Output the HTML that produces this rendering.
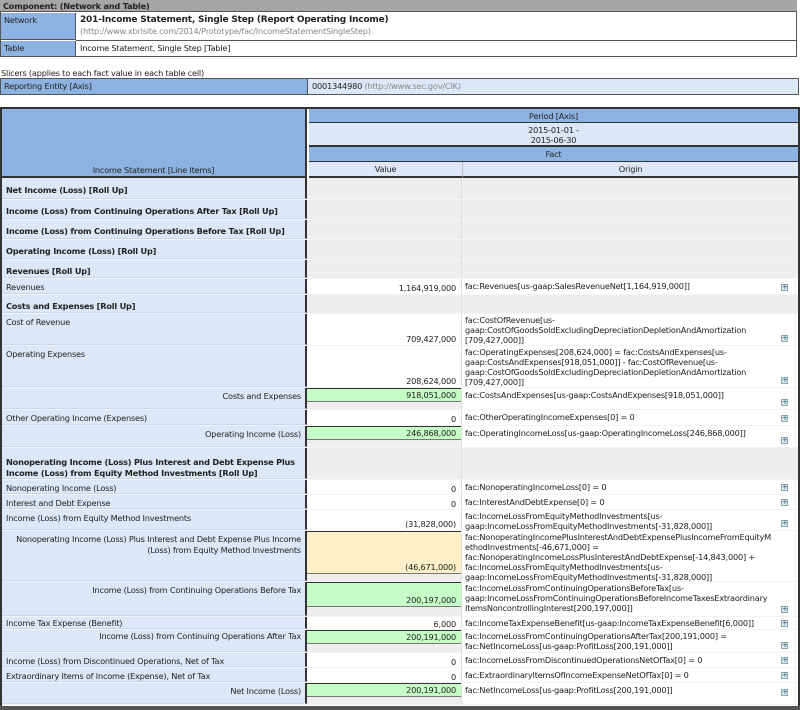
<!DOCTYPE html>
<html><head><meta charset="utf-8"><style>
*{margin:0;padding:0;box-sizing:border-box}
body{width:800px;height:710px;background:#fff;font-family:Verdana,"DejaVu Sans","Liberation Sans",sans-serif;font-size:8.2px;color:#222;position:relative;overflow:hidden;letter-spacing:-0.2px}
.a{position:absolute}
.hb{background:#8db3e2}
.lb{background:#dce8f8}
.row{position:absolute;left:2px;width:796px;display:flex;border-bottom:1px solid #f4f4f4}
.l{width:305px;background:#dce8f8;padding:3px 4px;border-right:2px solid #333;border-bottom:1px solid #c8d8ec;line-height:11px}
.v{width:155px;background:#eee;position:relative;border-right:1px solid #ddd}
.o{flex:1;background:#eee;position:relative;line-height:10px;padding:1px 3px}
.w{background:#fff}
.vi{position:absolute;left:0;right:0;top:0;text-align:right;padding-right:5px;display:flex;align-items:flex-end;justify-content:flex-end;padding-bottom:1px}
.g{background:#c6fdc6;border-top:1px solid #333;border-bottom:1px solid #777}
.y{background:#fdf0c8;border-top:1px solid #333;border-bottom:1px solid #777}
.p{position:absolute;right:10px;bottom:3px;width:7px;height:7px;border:1px solid #8aa;background:#dde8f4;font-size:7px;line-height:5px;text-align:center;color:#357}
.b{font-weight:bold}
.r{text-align:right}
</style></head><body>
<div class="a" style="left:0;top:0;width:797px;height:57px;border:1px solid #555;border-top:none"></div>
<div class="a b" style="left:0;top:0;width:797px;height:12px;background:#a6a6a6;border-bottom:1px solid #555;padding:1px 3px;line-height:10px">Component: (Network and Table)</div>
<div class="a hb" style="left:1px;top:13px;width:75px;height:27px;padding:2px 3px;border-right:1px solid #555;border-bottom:1px solid #555">Network</div>
<div class="a" style="left:80px;top:14px;line-height:11px"><span class="b" style="font-size:9px">201-Income Statement, Single Step (Report Operating Income)</span><br><span style="color:#888">(http://www.xbrlsite.com/2014/Prototype/fac/IncomeStatementSingleStep)</span></div>
<div class="a" style="left:76px;top:40px;width:721px;height:1px;background:#555"></div>
<div class="a hb" style="left:1px;top:41px;width:75px;height:15px;padding:2px 3px;border-right:1px solid #555">Table</div>
<div class="a" style="left:80px;top:43px">Income Statement, Single Step [Table]</div>
<div class="a" style="left:1px;top:68px">Slicers (applies to each fact value in each table cell)</div>
<div class="a" style="left:0;top:78px;width:799px;height:17px;border:1px solid #555;background:#dce8f8"></div>
<div class="a hb" style="left:1px;top:79px;width:307px;height:15px;padding:2px 3px;border-right:1px solid #555">Reporting Entity [Axis]</div>
<div class="a" style="left:312px;top:81px">0001344980 <span style="color:#888">(http://www.sec.gov/CIK)</span></div>

<div class="a" style="left:0;top:107px;width:800px;height:603px;border:2px solid #333;border-bottom:none"></div>
<div class="a hb" style="left:2px;top:109px;width:305px;height:69px;border-right:2px solid #333;border-bottom:2px solid #333;text-align:center;padding-top:56px">Income Statement [Line Items]</div>
<div class="a hb" style="left:309px;top:109px;width:489px;height:14px;text-align:center;line-height:14px;border-bottom:1px solid #333">Period [Axis]</div>
<div class="a lb" style="left:309px;top:123px;width:489px;height:24px;text-align:center;line-height:10px;padding-top:2px;border-bottom:2px solid #333">2015-01-01 -<br>2015-06-30</div>
<div class="a hb" style="left:309px;top:147px;width:489px;height:15px;text-align:center;line-height:15px;border-bottom:1px solid #333">Fact</div>
<div class="a lb" style="left:309px;top:162px;width:154px;height:16px;text-align:center;line-height:15px;border-bottom:2px solid #333;border-right:1px solid #bbb">Value</div>
<div class="a lb" style="left:463px;top:162px;width:335px;height:16px;text-align:center;line-height:15px;border-bottom:2px solid #333">Origin</div>

<div class="row" style="top:178px;height:22px"><div class="l b" style="padding-top:7px">Net Income (Loss) [Roll Up]</div><div class="v"></div><div class="o"></div></div>
<div class="row" style="top:200px;height:20px"><div class="l b" style="padding-top:6px">Income (Loss) from Continuing Operations After Tax [Roll Up]</div><div class="v"></div><div class="o"></div></div>
<div class="row" style="top:220px;height:20px"><div class="l b" style="padding-top:6px">Income (Loss) from Continuing Operations Before Tax [Roll Up]</div><div class="v"></div><div class="o"></div></div>
<div class="row" style="top:240px;height:20px"><div class="l b" style="padding-top:6px">Operating Income (Loss) [Roll Up]</div><div class="v"></div><div class="o"></div></div>
<div class="row" style="top:260px;height:19px"><div class="l b" style="padding-top:6px">Revenues [Roll Up]</div><div class="v"></div><div class="o"></div></div>
<div class="row" style="top:279px;height:16px"><div class="l">Revenues</div><div class="v w"><div class="vi" style="height:15px">1,164,919,000</div></div><div class="o w" style="padding-top:2px">fac:Revenues[us-gaap:SalesRevenueNet[1,164,919,000]]<div class="p">+</div></div></div>
<div class="row" style="top:295px;height:19px"><div class="l b" style="padding-top:6px">Costs and Expenses [Roll Up]</div><div class="v"></div><div class="o"></div></div>
<div class="row" style="top:314px;height:32px"><div class="l">Cost of Revenue</div><div class="v w"><div class="vi" style="height:31px">709,427,000</div></div><div class="o w">fac:CostOfRevenue[us-<br>gaap:CostOfGoodsSoldExcludingDepreciationDepletionAndAmortization<br>[709,427,000]]<div class="p">+</div></div></div>
<div class="row" style="top:346px;height:42px"><div class="l">Operating Expenses</div><div class="v w"><div class="vi" style="height:41px">208,624,000</div></div><div class="o w">fac:OperatingExpenses[208,624,000] = fac:CostsAndExpenses[us-<br>gaap:CostsAndExpenses[918,051,000]] - fac:CostOfRevenue[us-<br>gaap:CostOfGoodsSoldExcludingDepreciationDepletionAndAmortization<br>[709,427,000]]<div class="p">+</div></div></div>
<div class="row" style="top:388px;height:22px"><div class="l r">Costs and Expenses</div><div class="v"><div class="vi g" style="height:14px">918,051,000</div></div><div class="o w" style="padding-top:2px">fac:CostsAndExpenses[us-gaap:CostsAndExpenses[918,051,000]]<div class="p">+</div></div></div>
<div class="row" style="top:410px;height:16px"><div class="l">Other Operating Income (Expenses)</div><div class="v w"><div class="vi" style="height:15px">0</div></div><div class="o w" style="padding-top:2px">fac:OtherOperatingIncomeExpenses[0] = 0<div class="p">+</div></div></div>
<div class="row" style="top:426px;height:22px"><div class="l r">Operating Income (Loss)</div><div class="v"><div class="vi g" style="height:14px">246,868,000</div></div><div class="o w" style="padding-top:2px">fac:OperatingIncomeLoss[us-gaap:OperatingIncomeLoss[246,868,000]]<div class="p">+</div></div></div>
<div class="row" style="top:448px;height:32px"><div class="l b" style="padding-top:9px">Nonoperating Income (Loss) Plus Interest and Debt Expense Plus Income (Loss) from Equity Method Investments [Roll Up]</div><div class="v"></div><div class="o"></div></div>
<div class="row" style="top:480px;height:15px"><div class="l">Nonoperating Income (Loss)</div><div class="v w"><div class="vi" style="height:15px">0</div></div><div class="o w" style="padding-top:2px">fac:NonoperatingIncomeLoss[0] = 0<div class="p">+</div></div></div>
<div class="row" style="top:495px;height:15px"><div class="l">Interest and Debt Expense</div><div class="v w"><div class="vi" style="height:15px">0</div></div><div class="o w" style="padding-top:2px">fac:InterestAndDebtExpense[0] = 0<div class="p">+</div></div></div>
<div class="row" style="top:510px;height:21px"><div class="l">Income (Loss) from Equity Method Investments</div><div class="v w"><div class="vi" style="height:20px">(31,828,000)</div></div><div class="o w">fac:IncomeLossFromEquityMethodInvestments[us-<br>gaap:IncomeLossFromEquityMethodInvestments[-31,828,000]]<div class="p">+</div></div></div>
<div class="row" style="top:531px;height:51px"><div class="l r">Nonoperating Income (Loss) Plus Interest and Debt Expense Plus Income (Loss) from Equity Method Investments</div><div class="v"><div class="vi y" style="height:43px">(46,671,000)</div></div><div class="o w">fac:NonoperatingIncomePlusInterestAndDebtExpensePlusIncomeFromEquityM<br>ethodInvestments[-46,671,000] =<br>fac:NonoperatingIncomeLossPlusInterestAndDebtExpense[-14,843,000] +<br>fac:IncomeLossFromEquityMethodInvestments[us-<br>gaap:IncomeLossFromEquityMethodInvestments[-31,828,000]]</div></div>
<div class="row" style="top:582px;height:35px"><div class="l r">Income (Loss) from Continuing Operations Before Tax</div><div class="v"><div class="vi g" style="height:25px">200,197,000</div></div><div class="o w">fac:IncomeLossFromContinuingOperationsBeforeTax[us-<br>gaap:IncomeLossFromContinuingOperationsBeforeIncomeTaxesExtraordinary<br>ItemsNoncontrollingInterest[200,197,000]]<div class="p">+</div></div></div>
<div class="row" style="top:617px;height:13px"><div class="l" style="padding-top:1px">Income Tax Expense (Benefit)</div><div class="v w"><div class="vi" style="height:13px">6,000</div></div><div class="o w" style="padding-top:1px">fac:IncomeTaxExpenseBenefit[us-gaap:IncomeTaxExpenseBenefit[6,000]]<div class="p" style="bottom:2px">+</div></div></div>
<div class="row" style="top:630px;height:23px"><div class="l r" style="padding-top:1px">Income (Loss) from Continuing Operations After Tax</div><div class="v"><div class="vi g" style="height:14px">200,191,000</div></div><div class="o w">fac:IncomeLossFromContinuingOperationsAfterTax[200,191,000] =<br>fac:NetIncomeLoss[us-gaap:ProfitLoss[200,191,000]]<div class="p">+</div></div></div>
<div class="row" style="top:653px;height:15px"><div class="l">Income (Loss) from Discontinued Operations, Net of Tax</div><div class="v w"><div class="vi" style="height:15px">0</div></div><div class="o w" style="padding-top:2px">fac:IncomeLossFromDiscontinuedOperationsNetOfTax[0] = 0<div class="p">+</div></div></div>
<div class="row" style="top:668px;height:15px"><div class="l">Extraordinary Items of Income (Expense), Net of Tax</div><div class="v w"><div class="vi" style="height:15px">0</div></div><div class="o w" style="padding-top:2px">fac:ExtraordinaryItemsOfIncomeExpenseNetOfTax[0] = 0<div class="p">+</div></div></div>
<div class="row" style="top:683px;height:22px"><div class="l r">Net Income (Loss)</div><div class="v"><div class="vi g" style="height:14px">200,191,000</div></div><div class="o w" style="padding-top:2px">fac:NetIncomeLoss[us-gaap:ProfitLoss[200,191,000]]<div class="p" style="bottom:8px">+</div></div></div>
<div class="a" style="left:0;top:706px;width:800px;height:4px;background:#555"></div>
</body></html>
